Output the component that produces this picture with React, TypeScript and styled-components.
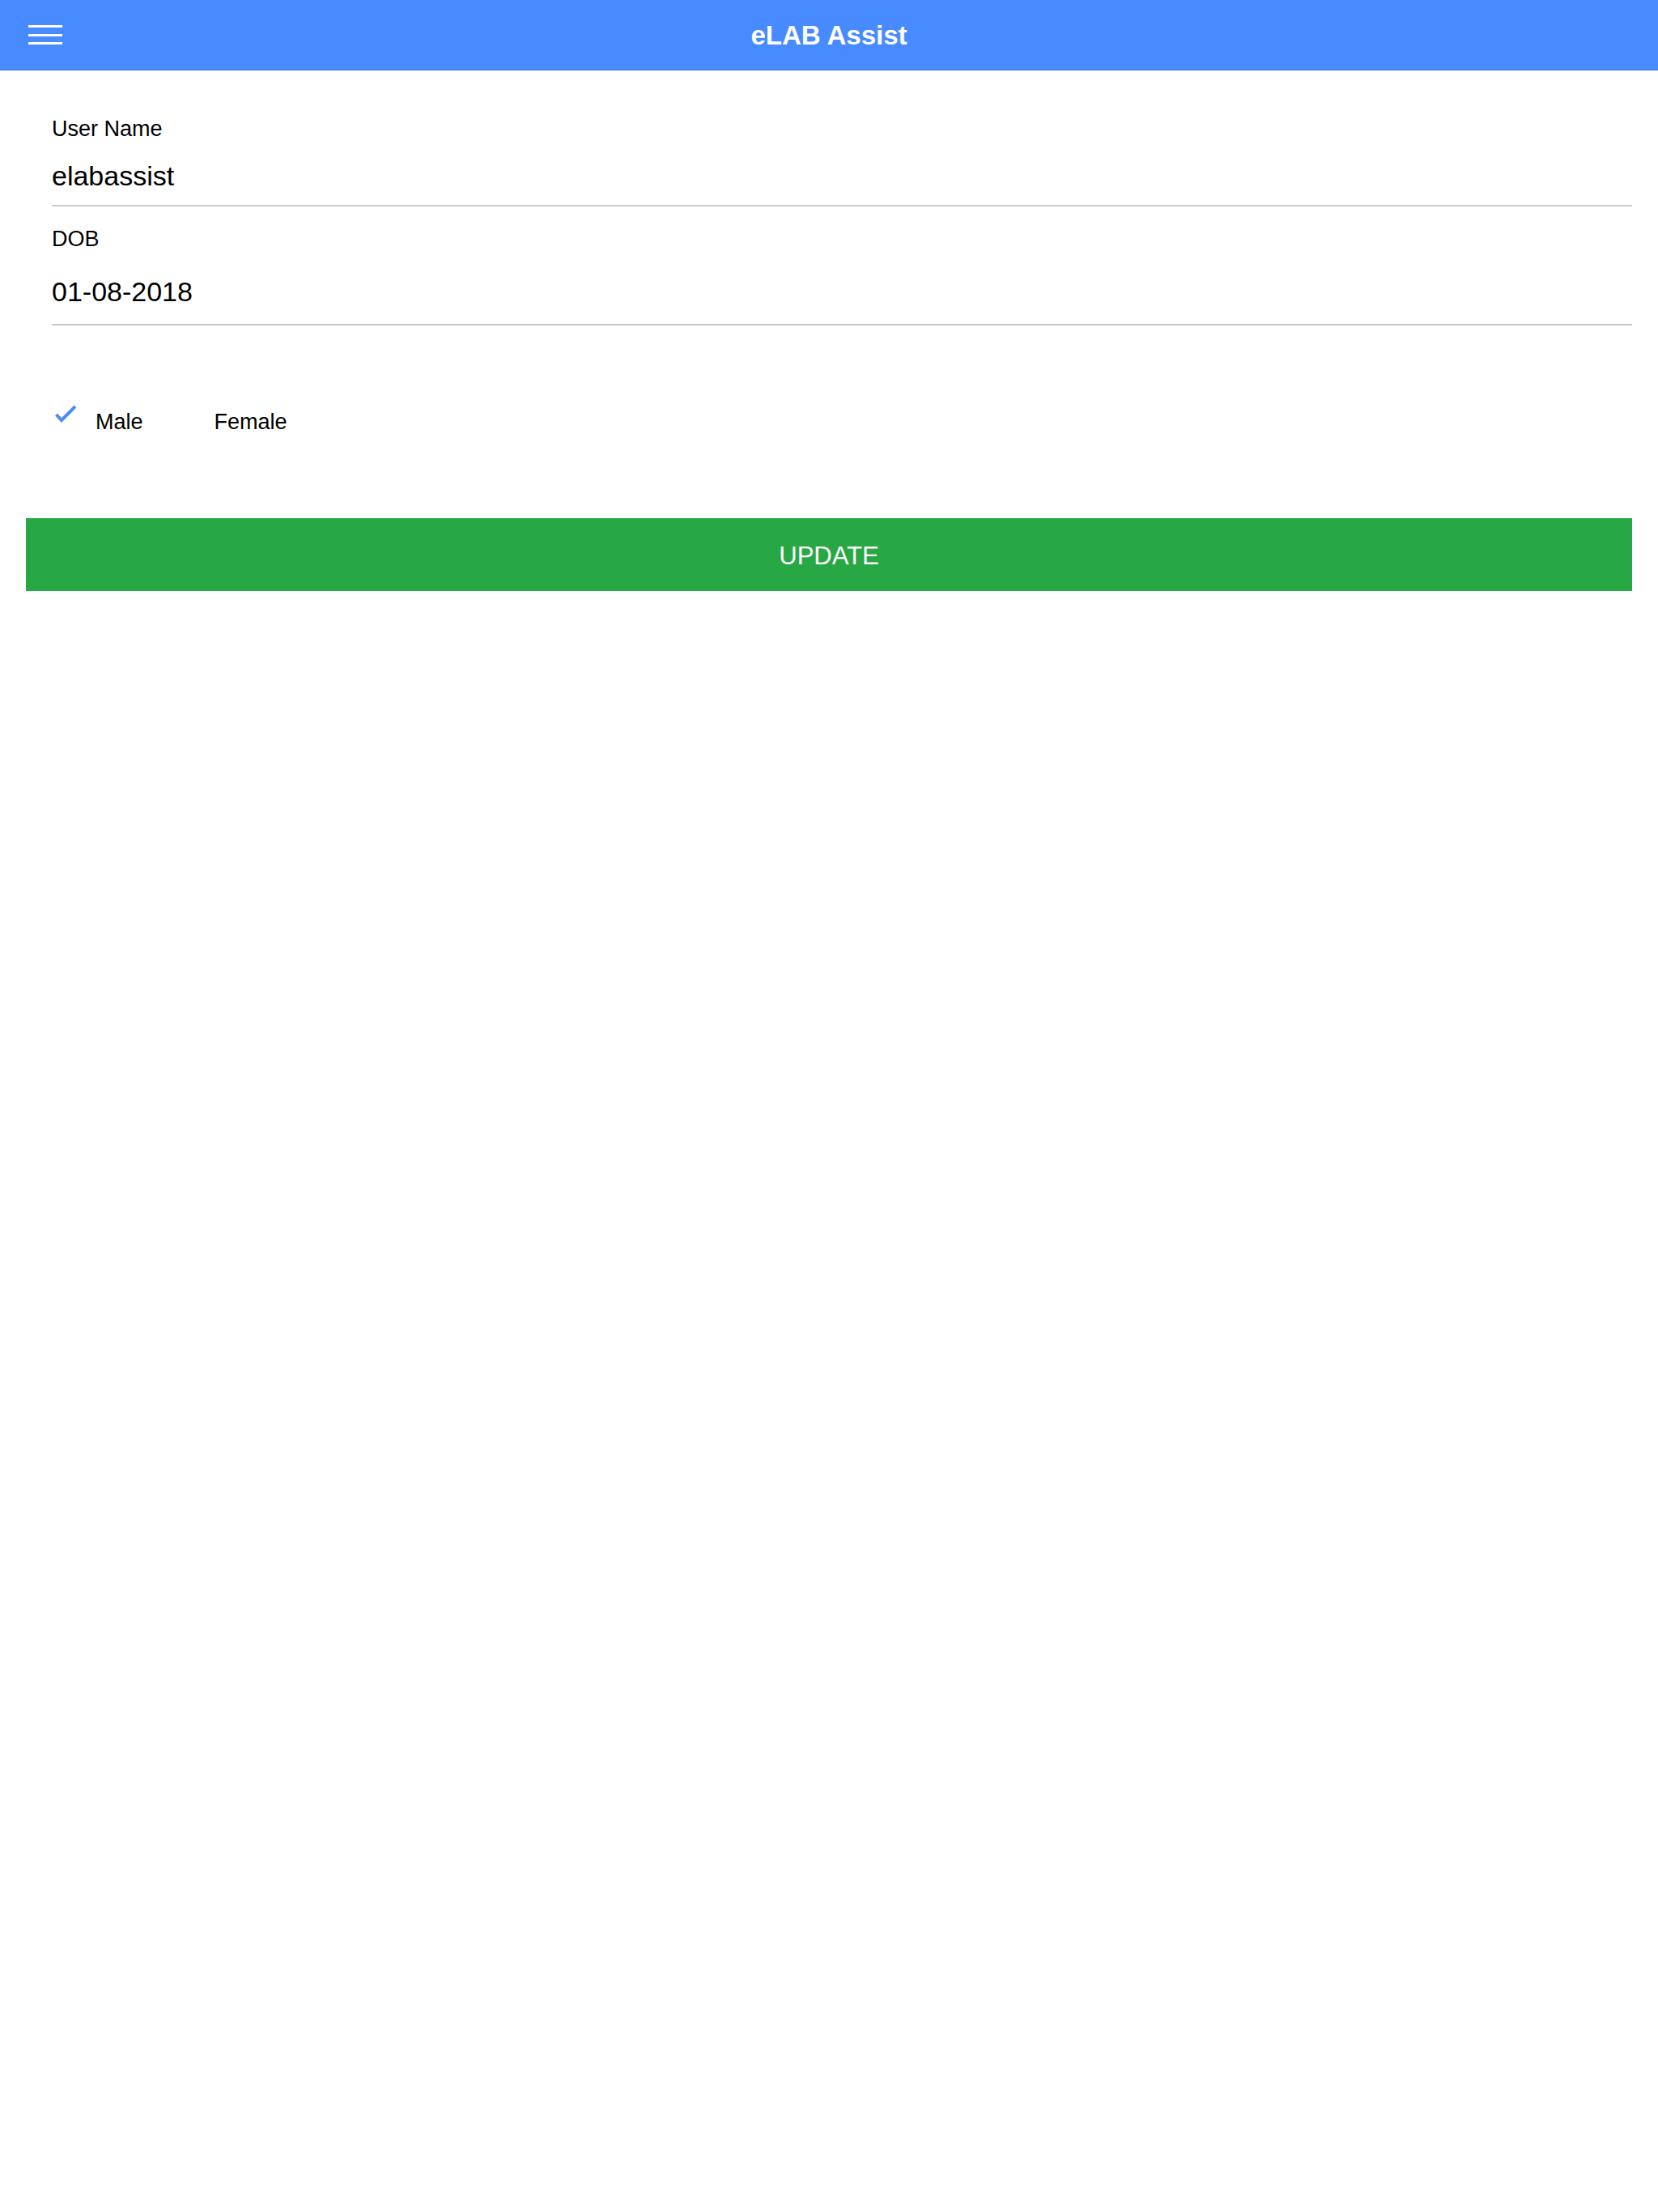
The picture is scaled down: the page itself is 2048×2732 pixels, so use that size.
import React, {FC} from 'react';
import styled, {createGlobalStyle} from "styled-components";

const GlobalStyle = createGlobalStyle`
  body {
    margin: 0;
    background: #ffffff;
    font-family: "Liberation Sans", Helvetica, Arial, sans-serif;
    color: #000000;
  }
`

export const Page = styled.div`
  min-height: 2732px;
  background: #ffffff;
`
export const Toolbar = styled.header`
  display: grid;
  grid-template-columns: 1fr auto 1fr;
  align-items: center;
  height: 87px;
  padding-top: 2px;
  box-sizing: border-box;
  background: #488aff;
  border-bottom: 1px solid #3a6ecc;
`
export const MenuButton = styled.button`
  display: flex;
  flex-direction: column;
  gap: 7.5px;
  width: 42px;
  margin-left: 35px;
  margin-top: -2px;
  padding: 0;
  border: none;
  background: transparent;
  cursor: pointer;
`
export const MenuBar = styled.span`
  display: block;
  height: 3px;
  background: #ffffff;
`
export const Title = styled.h1`
  margin: 0;
  font-size: 33px;
  font-weight: bold;
  color: #ffffff;
`
export const Content = styled.main`
  padding: 56px 32px 0;
`
export const Form = styled.form`
  padding-left: 32px;
`
export const Field = styled.div<{ $first?: boolean }>`
  margin-top: ${p => p.$first ? 0 : 24}px;
  border-bottom: 2px solid #c8c7cc;
`
export const FormLabel = styled.label`
  display: block;
  font-size: 27px;
  line-height: 32px;
`
export const Input = styled.input<{ $top: number, $bottom: number }>`
  display: block;
  box-sizing: content-box;
  width: 100%;
  height: 40px;
  margin: ${p => p.$top}px 0 0;
  padding: 0 0 ${p => p.$bottom}px;
  border: none;
  outline: none;
  background: transparent;
  font-family: inherit;
  font-size: 34px;
  color: #000000;
`
export const GenderRow = styled.div`
  display: flex;
  gap: 38px;
  margin-top: 103px;
  padding-left: 36px;
`
export const Option = styled.label`
  display: flex;
  align-items: flex-start;
  gap: 24px;
  font-size: 27px;
  line-height: 32px;
  cursor: pointer;
`
export const CheckSlot = styled.span<{ $checked: boolean }>`
  display: block;
  width: 26px;
  height: 22px;
  margin-top: -8px;
  visibility: ${p => p.$checked ? "visible" : "hidden"};
`
export const UpdateButton = styled.button`
  display: block;
  width: 100%;
  height: 90px;
  margin-top: 103px;
  padding: 4px 0 0;
  border: none;
  background: #28a745;
  color: #ffffff;
  font-family: inherit;
  font-size: 31px;
  line-height: 86px;
  cursor: pointer;
`

const Check: FC<{ checked: boolean }> = ({checked}) => (
    <CheckSlot $checked={checked}>
        <svg width="26" height="22" viewBox="0 0 26 22">
            <path d="M1.5 12 L8 19 L25 2" fill="none" stroke="#488aff" strokeWidth="4"/>
        </svg>
    </CheckSlot>
)

const App: FC = () => {
    const gender = "male";

    return (
        <Page>
            <GlobalStyle/>
            <Toolbar>
                <MenuButton aria-label="menu">
                    <MenuBar/>
                    <MenuBar/>
                    <MenuBar/>
                </MenuButton>
                <Title>eLAB Assist</Title>
                <span/>
            </Toolbar>
            <Content>
                <Form>
                    <Field $first>
                        <FormLabel>User Name</FormLabel>
                        <Input $top={22} $bottom={16} defaultValue="elabassist"/>
                    </Field>
                    <Field>
                        <FormLabel>DOB</FormLabel>
                        <Input $top={29} $bottom={20} defaultValue="01-08-2018"/>
                    </Field>
                </Form>
                <GenderRow>
                    <Option>
                        <Check checked={gender === "male"}/>
                        Male
                    </Option>
                    <Option>
                        <Check checked={gender === "female"}/>
                        Female
                    </Option>
                </GenderRow>
                <UpdateButton type="button">UPDATE</UpdateButton>
            </Content>
        </Page>
    );
};

export default App;
